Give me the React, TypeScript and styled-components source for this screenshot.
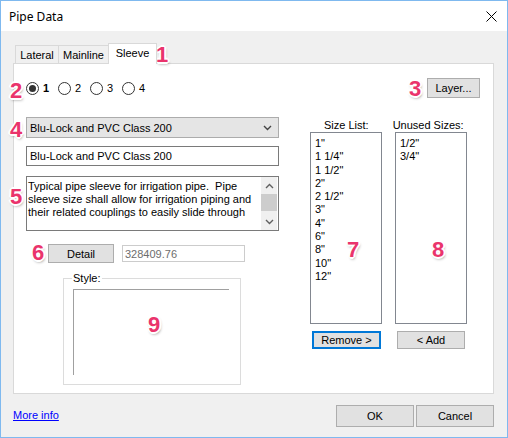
import { type FC } from 'react'
import styled, { createGlobalStyle } from 'styled-components'

const GlobalStyle = createGlobalStyle`
  body {
    margin: 0;
    background: #ffffff;
    font-family: 'Liberation Sans', Arial, sans-serif;
    font-size: 11px;
    color: #000000;
  }
  * {
    box-sizing: border-box;
  }
`

const Window = styled.div`
  position: relative;
  width: 508px;
  height: 438px;
  border: 1px solid #7fb9ef;
  display: flex;
  flex-direction: column;
  background: #f0f0f0;
`

const TitleBar = styled.div`
  height: 30px;
  background: #ffffff;
  display: flex;
  align-items: center;
  justify-content: space-between;
  padding: 0 10px 0 8px;
  font-family: 'Noto Sans', 'Open Sans', sans-serif;
  font-size: 12px;
`

const Body = styled.div`
  flex: 1;
  display: flex;
  flex-direction: column;
  padding: 12px 13px 0 12px;
`

const TabStrip = styled.div`
  display: flex;
  align-items: flex-end;
  height: 20px;
  padding-left: 2px;
  position: relative;
  z-index: 1;
`

const Tab = styled.div<{ $active?: boolean; $w: number }>`
  width: ${p => p.$w}px;
  height: ${p => (p.$active ? 21 : 18)}px;
  margin-left: -1px;
  margin-bottom: ${p => (p.$active ? -1 : 0)}px;
  border: 1px solid #d9d9d9;
  border-bottom: none;
  background: ${p => (p.$active ? '#ffffff' : '#f0f0f0')};
  display: flex;
  align-items: ${p => (p.$active ? 'flex-start' : 'center')};
  padding-top: ${p => (p.$active ? 3 : 0)}px;
  justify-content: center;
  &:first-child {
    margin-left: 0;
  }
`

const Panel = styled.div`
  height: 331px;
  background: #ffffff;
  border: 1px solid #d9d9d9;
  display: flex;
  flex-direction: column;
`

const TopRow = styled.div`
  margin-top: 14px;
  height: 20px;
  padding: 0 13px 0 12px;
  display: flex;
  align-items: center;
  justify-content: space-between;
`

const RadioGroup = styled.div`
  display: flex;
  align-items: center;
`

const RadioItem = styled.label<{ $checked?: boolean }>`
  width: 32px;
  display: flex;
  align-items: center;
  gap: 4px;
  font-weight: ${p => (p.$checked ? 'bold' : 'normal')};
`

const RadioCircle = styled.span<{ $checked?: boolean }>`
  width: 13px;
  height: 13px;
  border-radius: 50%;
  border: 1px solid #333333;
  background: #ffffff;
  display: flex;
  align-items: center;
  justify-content: center;
  &::after {
    content: '';
    display: ${p => (p.$checked ? 'block' : 'none')};
    width: 7px;
    height: 7px;
    border-radius: 50%;
    background: #333333;
  }
`

const Button = styled.div<{ $w: number; $h: number; $focused?: boolean }>`
  width: ${p => p.$w}px;
  height: ${p => p.$h}px;
  background: #e1e1e1;
  border: ${p => (p.$focused ? '2px solid #0078d7' : '1px solid #adadad')};
  display: flex;
  align-items: center;
  justify-content: center;
  flex-shrink: 0;
  white-space: nowrap;
`

const Columns = styled.div`
  margin-top: 19px;
  padding-left: 12px;
  display: flex;
`

const LeftCol = styled.div`
  width: 253px;
  display: flex;
  flex-direction: column;
`

const Combo = styled.div`
  height: 21px;
  background: #e5e5e5;
  border: 1px solid #acacac;
  display: flex;
  align-items: center;
  justify-content: space-between;
  padding: 0 6px 0 3px;
`

const TextBox = styled.div`
  margin-top: 8px;
  height: 20px;
  border: 1px solid #7a7a7a;
  display: flex;
  align-items: center;
  padding-left: 3px;
`

const Memo = styled.div`
  margin-top: 10px;
  height: 55px;
  border: 1px solid #7a7a7a;
  display: flex;
  justify-content: space-between;
`

const MemoText = styled.div`
  padding: 3px 0 0 1px;
  line-height: 13px;
  white-space: pre;
`

const ScrollBar = styled.div`
  width: 16px;
  margin-right: 1px;
  background: #f0f0f0;
  display: flex;
  flex-direction: column;
`

const ScrollArrow = styled.div`
  height: 17px;
  display: flex;
  align-items: center;
  justify-content: center;
`

const ScrollThumb = styled.div`
  height: 17px;
  background: #cdcdcd;
`

const ScrollTrack = styled.div`
  flex: 1;
`

const DetailRow = styled.div`
  margin-top: 13px;
  padding-left: 22px;
  display: flex;
  align-items: center;
  gap: 8px;
`

const ReadOnlyField = styled.div`
  width: 123px;
  height: 17px;
  border: 1px solid #cccccc;
  color: #6d6d6d;
  display: flex;
  align-items: center;
  padding-left: 2px;
`

const GroupBox = styled.div`
  margin: 15px 0 0 37px;
  width: 178px;
  height: 107px;
  border: 1px solid #dcdcdc;
  display: flex;
  flex-direction: column;
`

const Legend = styled.div`
  margin: -7px 0 0 8px;
  padding: 0 1px;
  width: fit-content;
  background: #ffffff;
  line-height: 13px;
`

const Preview = styled.div`
  margin: 4px 0 0 9px;
  width: 156px;
  height: 86px;
  border-top: 1px solid #a0a0a0;
  border-left: 1px solid #a0a0a0;
`

const RightCol = styled.div`
  margin-left: 31px;
  width: 157px;
  display: flex;
  flex-direction: column;
`

const LabelRow = styled.div`
  height: 15px;
  display: flex;
  align-items: center;
`

const ListLabel = styled.div<{ $indent: number }>`
  margin-left: ${p => p.$indent}px;
  white-space: nowrap;
`

const ListRow = styled.div`
  display: flex;
  gap: 13px;
`

const ListBox = styled.div`
  width: 72px;
  height: 192px;
  border: 1px solid #828790;
  padding: 4px 0 0 4px;
  line-height: 13.3px;
`

const ButtonRow = styled.div`
  margin-top: 7px;
  display: flex;
  padding-left: 2px;
  gap: 16px;
`

const Footer = styled.div`
  flex: 1;
  display: flex;
  align-items: flex-start;
  justify-content: space-between;
  padding-top: 11px;
`

const Link = styled.a`
  margin-top: 4px;
  color: #0000ff;
  text-decoration: underline;
`

const FooterButtons = styled.div`
  display: flex;
  gap: 2px;
`

const Marker = styled.div<{ $x: number; $y: number }>`
  position: absolute;
  left: ${p => p.$x - 10}px;
  top: ${p => p.$y - 11}px;
  width: 20px;
  height: 22px;
  line-height: 22px;
  text-align: center;
  font-family: 'Liberation Sans', Arial, sans-serif;
  font-weight: bold;
  font-size: 22px;
  color: #ea346c;
  text-shadow:
    -1px -1px 0 #fff, 1px -1px 0 #fff, -1px 1px 0 #fff, 1px 1px 0 #fff,
    0 -2px 0 #fff, 0 2px 0 #fff, -2px 0 0 #fff, 2px 0 0 #fff,
    1px 2px 3px rgba(0, 0, 0, 0.45);
`

const Chevron: FC<{ up?: boolean; color?: string }> = ({ up, color = '#606060' }) => (
  <svg width="9" height="6" viewBox="0 0 9 6">
    <path
      d={up ? 'M1 5 L4.5 1.5 L8 5' : 'M1 1 L4.5 4.5 L8 1'}
      fill="none"
      stroke={color}
      strokeWidth="1.4"
    />
  </svg>
)

const sizes = ['1"', '1 1/4"', '1 1/2"', '2"', '2 1/2"', '3"', '4"', '6"', '8"', '10"', '12"']
const unused = ['1/2"', '3/4"']

const markers: [string, number, number][] = [
  ['1', 161, 54],
  ['2', 15, 90],
  ['3', 414, 88],
  ['4', 15, 129],
  ['5', 15, 196],
  ['6', 37, 252],
  ['7', 352, 249],
  ['8', 437, 249],
  ['9', 153, 324],
]

export default function App() {
  return (
    <>
      <GlobalStyle />
      <Window>
        <TitleBar>
          <span>Pipe Data</span>
          <svg width="11" height="11" viewBox="0 0 11 11">
            <path d="M0.5 0.5 L10.5 10.5 M10.5 0.5 L0.5 10.5" stroke="#000" strokeWidth="1" />
          </svg>
        </TitleBar>
        <Body>
          <TabStrip>
            <Tab $w={44}>Lateral</Tab>
            <Tab $w={51}>Mainline</Tab>
            <Tab $w={49} $active>
              Sleeve
            </Tab>
          </TabStrip>
          <Panel>
            <TopRow>
              <RadioGroup>
                {['1', '2', '3', '4'].map(n => (
                  <RadioItem key={n} $checked={n === '1'}>
                    <RadioCircle $checked={n === '1'} />
                    {n}
                  </RadioItem>
                ))}
              </RadioGroup>
              <Button $w={53} $h={20}>
                Layer...
              </Button>
            </TopRow>
            <Columns>
              <LeftCol>
                <Combo>
                  <span>Blu-Lock and PVC Class 200</span>
                  <Chevron color="#444" />
                </Combo>
                <TextBox>Blu-Lock and PVC Class 200</TextBox>
                <Memo>
                  <MemoText>
                    {'Typical pipe sleeve for irrigation pipe.  Pipe\nsleeve size shall allow for irrigation piping and\ntheir related couplings to easily slide through'}
                  </MemoText>
                  <ScrollBar>
                    <ScrollArrow>
                      <Chevron up />
                    </ScrollArrow>
                    <ScrollThumb />
                    <ScrollTrack />
                    <ScrollArrow>
                      <Chevron />
                    </ScrollArrow>
                  </ScrollBar>
                </Memo>
                <DetailRow>
                  <Button $w={66} $h={19}>
                    Detail
                  </Button>
                  <ReadOnlyField>328409.76</ReadOnlyField>
                </DetailRow>
                <GroupBox>
                  <Legend>Style:</Legend>
                  <Preview />
                </GroupBox>
              </LeftCol>
              <RightCol>
                <LabelRow>
                  <ListLabel $indent={14}>Size List:</ListLabel>
                  <ListLabel $indent={24}>Unused Sizes:</ListLabel>
                </LabelRow>
                <ListRow>
                  <ListBox>
                    {sizes.map(s => (
                      <div key={s}>{s}</div>
                    ))}
                  </ListBox>
                  <ListBox>
                    {unused.map(s => (
                      <div key={s}>{s}</div>
                    ))}
                  </ListBox>
                </ListRow>
                <ButtonRow>
                  <Button $w={69} $h={18} $focused>
                    Remove &gt;
                  </Button>
                  <Button $w={68} $h={18}>
                    &lt; Add
                  </Button>
                </ButtonRow>
              </RightCol>
            </Columns>
          </Panel>
          <Footer>
            <Link>More info</Link>
            <FooterButtons>
              <Button $w={78} $h={22}>
                OK
              </Button>
              <Button $w={78} $h={22}>
                Cancel
              </Button>
            </FooterButtons>
          </Footer>
        </Body>
        {markers.map(([n, x, y]) => (
          <Marker key={n} $x={x} $y={y}>
            {n}
          </Marker>
        ))}
      </Window>
    </>
  )
}
